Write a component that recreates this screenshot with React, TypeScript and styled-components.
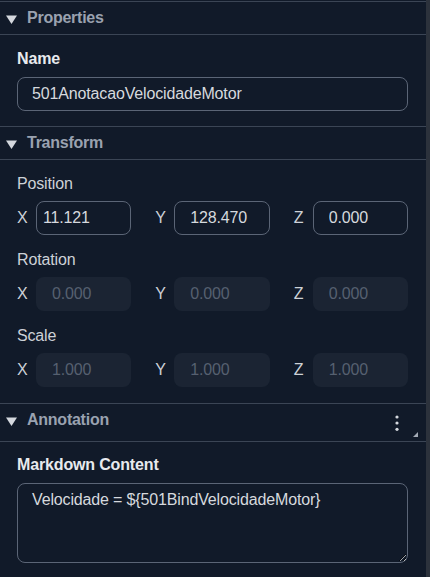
import React from "react";
import styled, { createGlobalStyle } from "styled-components";

const Global = createGlobalStyle`
  html, body { margin: 0; padding: 0; background: #111a29; }
  body { font-family: "Liberation Sans", Arial, sans-serif; }
  * { box-sizing: border-box; }
`;

const Shell = styled.div`
  display: flex;
  width: 430px;
  height: 577px;
  overflow: hidden;
  background: #111a29;
`;

const Panel = styled.div`
  flex: 1;
  min-width: 0;
  padding-top: 1px;
  display: flex;
  flex-direction: column;
`;

const ScrollStrip = styled.div`
  width: 4px;
  flex: none;
  background: #2c323c;
`;

const Section = styled.section`
  display: flex;
  flex-direction: column;
`;

const Header = styled.div<{ $tall?: boolean }>`
  position: relative;
  display: flex;
  align-items: flex-start;
  gap: 10px;
  padding: 6px 18px 6px 6px;
  border-top: 1px solid #3b4555;
  border-bottom: 1px solid #3b4555;
  min-height: ${(p) => (p.$tall ? 39 : 34)}px;
`;

const Caret = styled.svg`
  margin-top: 7px;
  flex: none;
`;

const HeaderTitle = styled.span`
  flex: 1;
  font-size: 16px;
  line-height: 20px;
  font-weight: 700;
  letter-spacing: -0.25px;
  color: #9aa2b0;
`;

const MenuButton = styled.button`
  width: 22px;
  height: 25px;
  padding: 0;
  border: none;
  background: transparent;
  display: flex;
  align-items: center;
  justify-content: center;
  color: #d4d8de;
`;

const CornerMark = styled.svg`
  position: absolute;
  right: 8px;
  bottom: 4px;
`;

const Body = styled.div<{ $top: number; $bottom: number }>`
  display: flex;
  flex-direction: column;
  padding: ${(p) => p.$top}px 18px ${(p) => p.$bottom}px 17px;
`;

const FieldLabel = styled.div<{ $strong?: boolean }>`
  font-size: 16px;
  line-height: 20px;
  letter-spacing: -0.15px;
  font-weight: ${(p) => (p.$strong ? 700 : 400)};
  color: ${(p) => (p.$strong ? "#e8eaee" : "#cdd1d7")};
  margin-bottom: ${(p) => (p.$strong ? 8 : 7)}px;
`;

const TextInput = styled.input`
  width: 100%;
  height: 34px;
  padding: 0 14px;
  border: 1.5px solid #5b6576;
  border-radius: 8px;
  background: transparent;
  color: #d6d9de;
  font-family: "Liberation Sans", Arial, sans-serif;
  font-size: 16px;
  letter-spacing: -0.15px;
  outline: none;
`;

const VectorGroup = styled.div`
  display: flex;
  flex-direction: column;
  & + & {
    margin-top: 15px;
  }
`;

const VectorRow = styled.div`
  display: grid;
  grid-template-columns: repeat(3, minmax(0, 1fr));
  column-gap: 24px;
`;

const AxisCell = styled.label`
  display: flex;
  align-items: center;
  gap: 8px;
  min-width: 0;
`;

const AxisName = styled.span`
  width: 11px;
  flex: none;
  font-size: 16px;
  color: #cdd1d7;
`;

const NumberInput = styled.input<{ $indent?: number }>`
  width: 0;
  min-width: 0;
  flex: 1;
  height: 34px;
  padding: 0 4px 0 ${(p) => p.$indent ?? 15}px;
  border: 1.5px solid #5b6576;
  border-radius: 8px;
  background: transparent;
  color: #d6d9de;
  font-family: "Liberation Sans", Arial, sans-serif;
  font-size: 16px;
  letter-spacing: -0.15px;
  outline: none;
  &:disabled {
    border-color: transparent;
    background: #1b2433;
    color: #566070;
  }
`;

const TextArea = styled.textarea`
  width: 100%;
  height: 80px;
  padding: 7px 14px;
  border: 1.5px solid #5b6576;
  border-radius: 8px;
  background: transparent;
  color: #d6d9de;
  font-family: "Liberation Sans", Arial, sans-serif;
  font-size: 16px;
  letter-spacing: -0.15px;
  resize: vertical;
  outline: none;
  color-scheme: dark;
`;

const CaretIcon = () => (
  <Caret width="11" height="9" viewBox="0 0 11 9">
    <path d="M0 0.5 H11 L5.5 9 Z" fill="#d4d8de" />
  </Caret>
);

type Axis = { axis: string; value: string; indent?: number };

const Vector = ({ label, items, disabled }: { label: string; items: Axis[]; disabled?: boolean }) => (
  <VectorGroup>
    <FieldLabel>{label}</FieldLabel>
    <VectorRow>
      {items.map((it) => (
        <AxisCell key={it.axis}>
          <AxisName>{it.axis}</AxisName>
          <NumberInput value={it.value} readOnly disabled={disabled} $indent={it.indent} />
        </AxisCell>
      ))}
    </VectorRow>
  </VectorGroup>
);

export default function App() {
  return (
    <>
      <Global />
      <Shell>
        <Panel>
          <Section>
            <Header>
              <CaretIcon />
              <HeaderTitle>Properties</HeaderTitle>
            </Header>
            <Body $top={14} $bottom={15}>
              <FieldLabel $strong>Name</FieldLabel>
              <TextInput value="501AnotacaoVelocidadeMotor" readOnly />
            </Body>
          </Section>
          <Section>
            <Header>
              <CaretIcon />
              <HeaderTitle>Transform</HeaderTitle>
            </Header>
            <Body $top={14} $bottom={16}>
              <Vector
                label="Position"
                items={[
                  { axis: "X", value: "11.121", indent: 6 },
                  { axis: "Y", value: "128.470" },
                  { axis: "Z", value: "0.000" },
                ]}
              />
              <Vector
                label="Rotation"
                disabled
                items={[
                  { axis: "X", value: "0.000" },
                  { axis: "Y", value: "0.000" },
                  { axis: "Z", value: "0.000" },
                ]}
              />
              <Vector
                label="Scale"
                disabled
                items={[
                  { axis: "X", value: "1.000" },
                  { axis: "Y", value: "1.000" },
                  { axis: "Z", value: "1.000" },
                ]}
              />
            </Body>
          </Section>
          <Section>
            <Header $tall>
              <CaretIcon />
              <HeaderTitle>Annotation</HeaderTitle>
              <MenuButton aria-label="More">
                <svg width="4" height="16" viewBox="0 0 4 16">
                  <circle cx="2" cy="2" r="1.6" fill="currentColor" />
                  <circle cx="2" cy="8" r="1.6" fill="currentColor" />
                  <circle cx="2" cy="14.3" r="1.6" fill="currentColor" />
                </svg>
              </MenuButton>
              <CornerMark width="5" height="5" viewBox="0 0 5 5">
                <path d="M5 0 V5 H0 Z" fill="#a3aab5" />
              </CornerMark>
            </Header>
            <Body $top={13} $bottom={14}>
              <FieldLabel $strong>Markdown Content</FieldLabel>
              <TextArea value={"Velocidade = ${501BindVelocidadeMotor}"} readOnly />
            </Body>
          </Section>
        </Panel>
        <ScrollStrip />
      </Shell>
    </>
  );
}
